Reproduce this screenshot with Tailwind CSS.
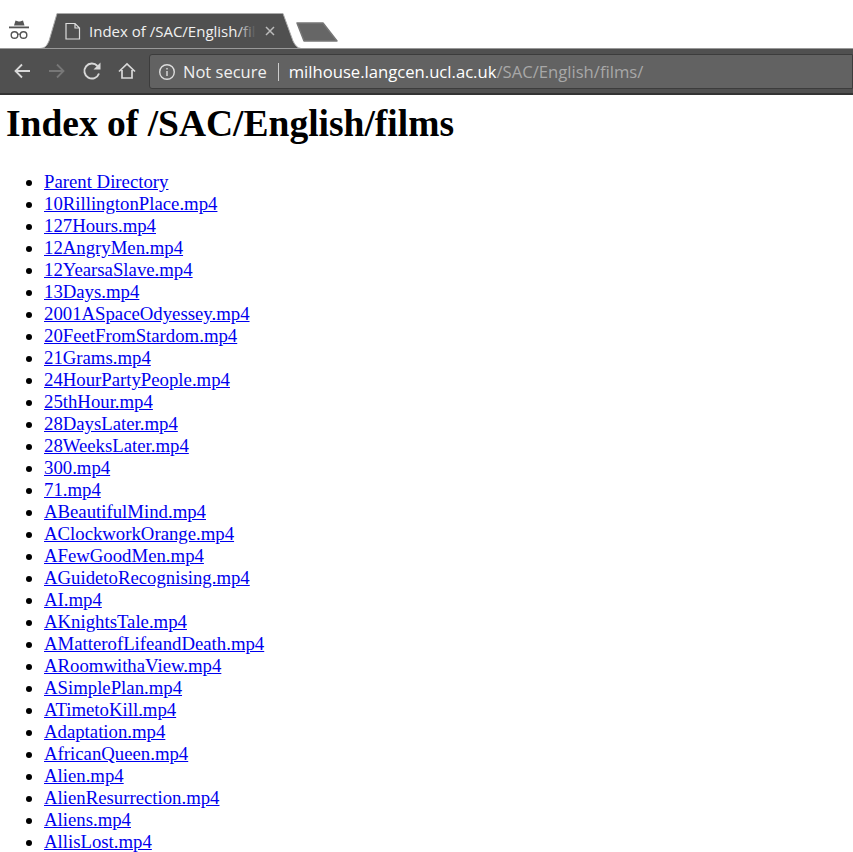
<!DOCTYPE html>
<html lang="en"><head><meta charset="utf-8"><title>Index of /SAC/English/films</title>
<script src="https://cdn.jsdelivr.net/npm/@tailwindcss/browser@4"></script></head>
<body class="bg-white text-black overflow-hidden h-[852px] font-['Liberation_Serif',serif]">
<div class="relative h-[95px] font-['Open_Sans',sans-serif]">
  <div class="h-[48px] bg-white"></div>
  <svg class="absolute left-0 top-0" width="345" height="50" viewBox="0 0 345 50" fill="none">
    <path d="M14 25.500l1.500-5 3 1 1.500 0 3-1 1.500 5z" fill="#555"/><rect x="9" y="26.500" width="20" height="1.800" fill="#555"/>
    <circle cx="14.500" cy="35" r="3.300" stroke="#555" stroke-width="1.400"/><circle cx="23.500" cy="35" r="3.300" stroke="#555" stroke-width="1.400"/><path d="M17.500 34.500q1.500-1 3 0" stroke="#555" stroke-width="1.200"/>
    <path d="M40 48.500C46 48 47 45 49 41L57 13.500h226l10 27.500c2 4 4 7 8 7.500z" fill="#505050" stroke="#aaa" stroke-width="1"/>
    <path d="M297 23h26l14 18h-33z" fill="#666" stroke="#777" stroke-linejoin="round" stroke-width="1.500"/>
    <path d="M66 23.500h9l4.500 4.500V39H66z M75 23.500V28h4.500" stroke="#ddd" stroke-width="1.200" fill="none"/>
    <path d="M266 27l8 8M274 27l-8 8" stroke="#bbb" stroke-width="1.500"/>
  </svg>
  <div class="absolute left-[89px] top-[20px] w-[167px] h-[22px] overflow-hidden whitespace-nowrap text-[15px] leading-[22px] text-[#f0f0f0]">Index of /SAC/English/films</div>
  <div class="absolute left-[237px] top-[20px] w-[19px] h-[22px] bg-gradient-to-r from-[#50505000] to-[#505050]"></div>
  <div class="h-[47px] bg-[#505050] border-t border-[#999] border-b-2 border-b-[#333] flex items-center relative">
    <svg class="absolute left-[12px] top-[12px]" width="20" height="20" viewBox="0 0 20 20" fill="none" stroke="#d8d8d8" stroke-width="1.800"><path d="M18 10H3.500M10 3.500 3.500 10l6.500 6.500"/></svg>
    <svg class="absolute left-[47px] top-[12px]" width="20" height="20" viewBox="0 0 20 20" fill="none" stroke="#777" stroke-width="1.800"><path d="M2 10h14.500M10 3.500l6.500 6.500-6.500 6.500"/></svg>
    <svg class="absolute left-[82px] top-[12px]" width="20" height="20" viewBox="0 0 20 20" fill="none" stroke="#d8d8d8" stroke-width="1.900"><path d="M17 12.500A7.500 7.500 0 1 1 15.500 5"/><path d="M18.500 1.500v7h-7z" fill="#d8d8d8" stroke="none"/></svg>
    <svg class="absolute left-[117px] top-[12px]" width="20" height="20" viewBox="0 0 20 20" fill="none" stroke="#d8d8d8" stroke-width="1.700"><path d="M2 10.500 10 3l8 7.500M5 9v8h10V9"/></svg>
    <div class="absolute left-[149px] top-[5px] right-0 h-[35px] bg-[#626262] border border-[#3c3c3c] rounded-l-[3px] flex items-center text-[16.500px] whitespace-nowrap pt-px">
      <svg class="ml-[8px] shrink-0" width="18" height="18" viewBox="0 0 18 18" fill="none" stroke="#ddd" stroke-width="1.400"><circle cx="9" cy="9" r="7.300"/><path d="M9 8v5M9 5v1.600"/></svg>
      <span class="ml-[7px] text-[#f0f0f0]">Not secure</span>
      <span class="ml-[11px] w-px h-[18px] bg-[#ccc]"></span>
      <span class="ml-[10px] text-[16.650px] text-white">milhouse.langcen.ucl.ac.uk<span class="text-[#a8a8a8]">/SAC/English/films/</span></span>
    </div>
  </div>
</div>
<div class="px-[7px] text-[18.750px] leading-[22px]">
  <h1 class="text-[37.500px] leading-[44px] font-bold mt-[7px] mb-[25px] -ml-px">Index of /SAC/English/films</h1>
  <ul class="list-disc pl-[37px] [&_a]:text-[#0000ee] [&_a]:underline">
    <li><a href="#">Parent Directory</a></li>
    <li><a href="#">10RillingtonPlace.mp4</a></li>
    <li><a href="#">127Hours.mp4</a></li>
    <li><a href="#">12AngryMen.mp4</a></li>
    <li><a href="#">12YearsaSlave.mp4</a></li>
    <li><a href="#">13Days.mp4</a></li>
    <li><a href="#">2001ASpaceOdyessey.mp4</a></li>
    <li><a href="#">20FeetFromStardom.mp4</a></li>
    <li><a href="#">21Grams.mp4</a></li>
    <li><a href="#">24HourPartyPeople.mp4</a></li>
    <li><a href="#">25thHour.mp4</a></li>
    <li><a href="#">28DaysLater.mp4</a></li>
    <li><a href="#">28WeeksLater.mp4</a></li>
    <li><a href="#">300.mp4</a></li>
    <li><a href="#">71.mp4</a></li>
    <li><a href="#">ABeautifulMind.mp4</a></li>
    <li><a href="#">AClockworkOrange.mp4</a></li>
    <li><a href="#">AFewGoodMen.mp4</a></li>
    <li><a href="#">AGuidetoRecognising.mp4</a></li>
    <li><a href="#">AI.mp4</a></li>
    <li><a href="#">AKnightsTale.mp4</a></li>
    <li><a href="#">AMatterofLifeandDeath.mp4</a></li>
    <li><a href="#">ARoomwithaView.mp4</a></li>
    <li><a href="#">ASimplePlan.mp4</a></li>
    <li><a href="#">ATimetoKill.mp4</a></li>
    <li><a href="#">Adaptation.mp4</a></li>
    <li><a href="#">AfricanQueen.mp4</a></li>
    <li><a href="#">Alien.mp4</a></li>
    <li><a href="#">AlienResurrection.mp4</a></li>
    <li><a href="#">Aliens.mp4</a></li>
    <li><a href="#">AllisLost.mp4</a></li>
  </ul>
</div>
</body></html>
